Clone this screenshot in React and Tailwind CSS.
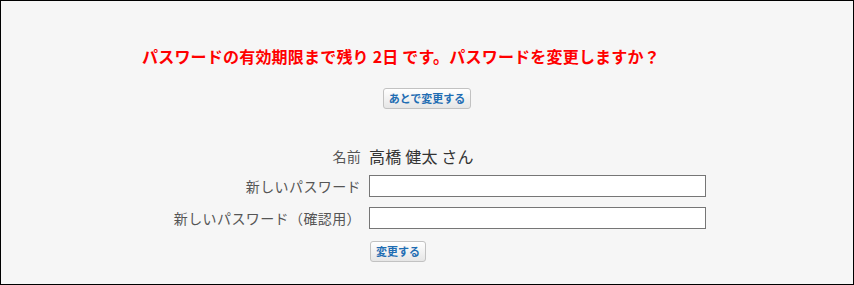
import React from "react";

const jp = { fontFamily: '"Noto Sans CJK JP", "Noto Sans", sans-serif' };

function Btn({ children }) {
  return (
    <button
      type="button"
      className="h-[21px] px-[5px] text-[11px] font-bold leading-none text-[#1f6db3] border border-[#c2c2c2] rounded-[3px] bg-gradient-to-b from-white to-[#e6e6e6]"
    >
      {children}
    </button>
  );
}

export default function App() {
  return (
    <div
      className="w-[854px] h-[285px] border border-black bg-[#f6f6f6] box-border"
      style={jp}
    >
      <p className="pt-[43px] pl-[141px] text-[16px] leading-6 font-bold tracking-[0.2px] text-[#ff0000] whitespace-nowrap">
        パスワードの有効期限まで残り 2日 です。パスワードを変更しますか？
      </p>
      <div className="mt-[20px] flex justify-center">
        <Btn>あとで変更する</Btn>
      </div>

      <div className="mt-[35px] grid grid-cols-[360px_337px] gap-x-2 items-center">
        <div className="text-right text-[14px] tracking-[0.3px] text-[#555] h-6 leading-6">名前</div>
        <div className="text-[16px] tracking-[0.2px] text-[#333] h-6 leading-6">高橋 健太 さん</div>

        <div className="mt-[7px] text-right text-[14px] tracking-[0.4px] text-[#555]">新しいパスワード</div>
        <input
          type="password"
          className="mt-[7px] h-[22px] w-[337px] border border-[#767676] bg-white"
        />

        <div className="mt-[10px] text-right text-[14px] tracking-[0.4px] text-[#555]">新しいパスワード（確認用）</div>
        <input
          type="password"
          className="mt-[10px] h-[22px] w-[337px] border border-[#767676] bg-white"
        />

        <div />
        <div className="mt-[12px] flex pl-px">
          <Btn>変更する</Btn>
        </div>
      </div>
    </div>
  );
}
